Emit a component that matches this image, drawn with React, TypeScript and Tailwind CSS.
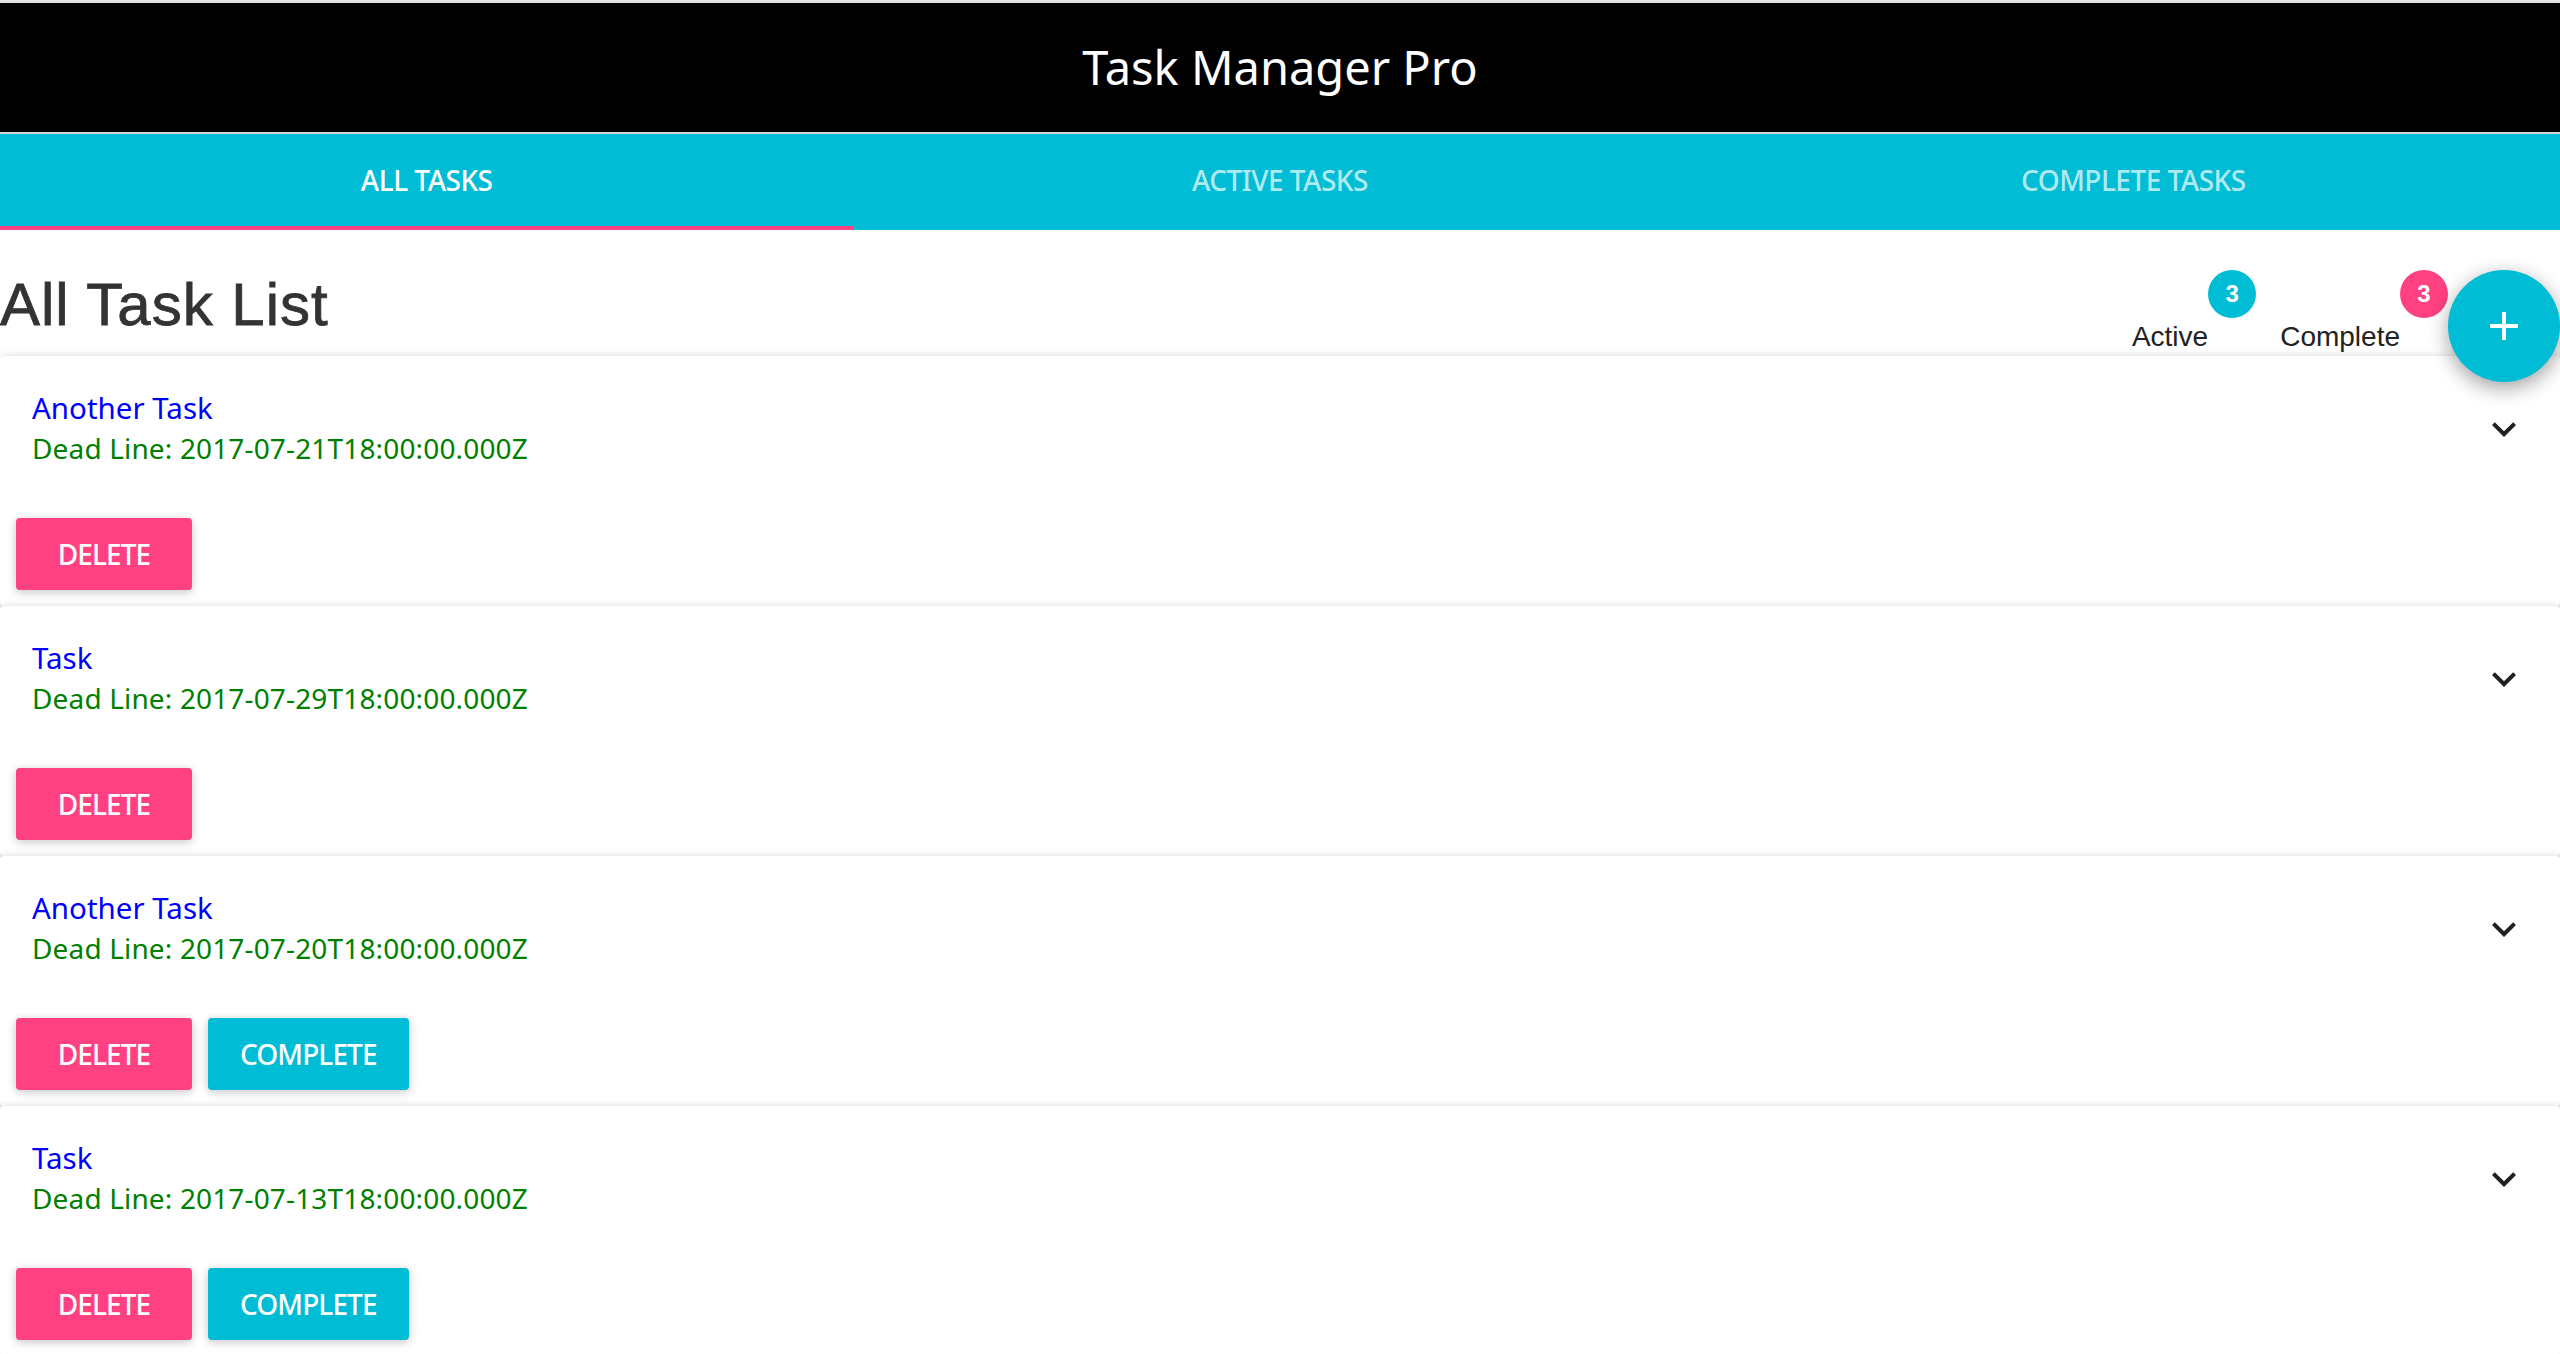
import React from "react";

const tasks = [
  { title: "Another Task", deadline: "2017-07-21T18:00:00.000Z", complete: true },
  { title: "Task", deadline: "2017-07-29T18:00:00.000Z", complete: true },
  { title: "Another Task", deadline: "2017-07-20T18:00:00.000Z", complete: false },
  { title: "Task", deadline: "2017-07-13T18:00:00.000Z", complete: false },
];

function Chevron() {
  return (
    <svg viewBox="0 0 24 24" width="48" height="48" className="fill-[#212121]">
      <path d="M16.59 8.59L12 13.17 7.41 8.59 6 10l6 6 6-6z" />
    </svg>
  );
}

function Plus() {
  return (
    <svg viewBox="0 0 24 24" width="48" height="48" className="fill-white">
      <path d="M19 13h-6v6h-2v-6H5v-2h6V5h2v6h6v2z" />
    </svg>
  );
}

function Badge({ label, color }: { label: string; color: string }) {
  return (
    <div className="relative pt-[48px] pr-[48px] pb-[24px] pl-[24px]">
      <span className="block text-[28px] leading-[38px] text-[#222] font-['Liberation_Sans',Arial,sans-serif]">
        {label}
      </span>
      <span
        className={`absolute top-0 right-0 w-[48px] h-[48px] rounded-full flex items-center justify-center text-white text-[24px] font-bold font-['Liberation_Sans',Arial,sans-serif] ${color}`}
      >
        3
      </span>
    </div>
  );
}

function Card({ t }: { t: (typeof tasks)[number] }) {
  return (
    <div className="relative bg-white h-[250px] shadow-[0_2px_12px_rgba(0,0,0,0.12),0_2px_8px_rgba(0,0,0,0.12)] rounded-[4px]">
      <div className="pt-[32px] px-[32px] pb-[34px] font-['Noto_Sans','Open_Sans',sans-serif]">
        <div className="text-[29.5px] leading-[40px] text-[#0000ff]">{t.title}</div>
        <div className="text-[28px] leading-[40px] tracking-[0.15px] text-[#008000]">Dead Line: {t.deadline}</div>
      </div>
      <div className="absolute top-[49px] right-[32px]">
        <Chevron />
      </div>
      <div className="p-[16px] flex gap-[16px]">
        <button className="h-[72px] min-w-[176px] px-[32px] rounded-[4px] bg-[#ff4081] text-white text-[28px] font-medium tracking-[-0.9px] uppercase font-['Noto_Sans','Open_Sans',sans-serif] shadow-[0_2px_12px_rgba(0,0,0,0.12),0_2px_8px_rgba(0,0,0,0.12)]">
          Delete
        </button>
        {!t.complete && (
          <button className="h-[72px] min-w-[176px] px-[32px] rounded-[4px] bg-[#00bcd4] text-white text-[28px] font-medium tracking-[-0.9px] uppercase font-['Noto_Sans','Open_Sans',sans-serif] shadow-[0_2px_12px_rgba(0,0,0,0.12),0_2px_8px_rgba(0,0,0,0.12)]">
            Complete
          </button>
        )}
      </div>
    </div>
  );
}

export default function App() {
  return (
    <div className="w-[2560px] h-[1354px] overflow-hidden bg-white">
      <div className="h-[3px] bg-[#e2e2e2]" />
      <header className="h-[129px] bg-black flex items-center justify-center">
        <h1 className="text-white text-[47px] font-['Noto_Sans','Open_Sans',sans-serif] font-normal">
          Task Manager Pro
        </h1>
      </header>
      <div className="h-[2px] bg-[#d6d6d6]" />
      <nav className="h-[96px] bg-[#00bcd4] flex flex-col">
        <div className="flex flex-1">
          <div className="flex-1 flex items-center justify-center text-white text-[28px] font-medium tracking-[-0.5px] font-['Noto_Sans','Open_Sans',sans-serif]">
            ALL TASKS
          </div>
          <div className="flex-1 flex items-center justify-center text-white/70 text-[28px] font-medium tracking-[-0.5px] font-['Noto_Sans','Open_Sans',sans-serif]">
            ACTIVE TASKS
          </div>
          <div className="flex-1 flex items-center justify-center text-white/70 text-[28px] font-medium tracking-[-0.5px] font-['Noto_Sans','Open_Sans',sans-serif]">
            COMPLETE TASKS
          </div>
        </div>
        <div className="h-[4px] flex">
          <div className="w-[854px] bg-[#ff4081]" />
        </div>
      </nav>
      <div className="h-[126px] pt-[40px] flex justify-between items-start">
        <h2 className="text-[60px] text-[#333] tracking-[1px] [-webkit-text-stroke:0.8px_#333] font-['Liberation_Sans',Arial,sans-serif] leading-[1.15]">
          All Task List
        </h2>
        <div className="flex items-start">
          <Badge label="Active" color="bg-[#00bcd4]" />
          <Badge label="Complete" color="bg-[#ff4081]" />
          <button className="relative z-10 w-[112px] h-[112px] rounded-full bg-[#00bcd4] flex items-center justify-center shadow-[0_6px_20px_rgba(0,0,0,0.16),0_6px_20px_rgba(0,0,0,0.23)]">
            <Plus />
          </button>
        </div>
      </div>
      <div className="flex flex-col">
        {tasks.map((t, i) => (
          <Card key={i} t={t} />
        ))}
      </div>
    </div>
  );
}
